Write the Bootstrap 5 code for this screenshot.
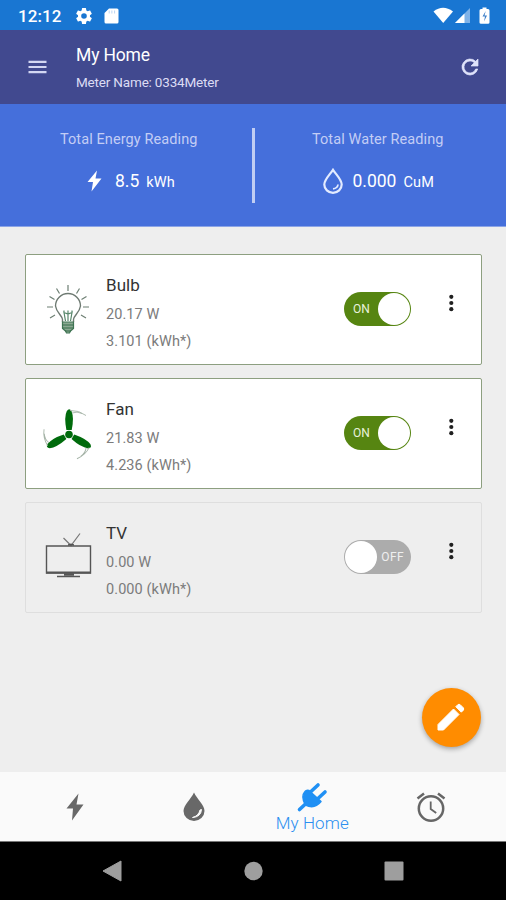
<!DOCTYPE html>
<html lang="en">
<head>
<meta charset="utf-8">
<meta name="viewport" content="width=device-width, initial-scale=1">
<title>My Home</title>
<link href="https://cdn.jsdelivr.net/npm/bootstrap@5.3.0/dist/css/bootstrap.min.css" rel="stylesheet">
<style>
body{font-family:Roboto,"Liberation Sans",sans-serif;background:#eee;color:#333;width:506px;height:900px;overflow:hidden}
svg{display:block;flex:none}
.status-bar{height:30px;background:#1976d2;padding:2px 15px 0 18px}
.clock{font-size:17px;font-weight:500;line-height:28px;width:58px;letter-spacing:.1px}
.sd-card{margin-left:12px}
.app-bar{height:74px;background:#41498f;padding:0 26px 0 28px}
.app-text{margin-left:28px}
.app-title{font-size:17.5px;line-height:24px;color:#fff;letter-spacing:-.15px;padding-top:1px}
.app-sub{font-size:13.5px;line-height:20px;color:#dcdcf4;margin-top:5px;letter-spacing:-.18px}
.readings{height:123px;background:#456fdb;border-bottom:1px solid #8ba4e6;padding-top:24px}
.reading{width:252px;padding-top:4px}
.reading-energy{padding-left:6px}
.reading-water{padding-right:5px}
.reading-label{font-size:14.5px;line-height:16px;color:#c3cdf5;letter-spacing:.1px}
.reading-row{height:28px;margin-top:19px;color:#fff}
.reading-energy .reading-row{padding-left:81px}
.reading-water .reading-row{padding-left:68px}
.reading-num{font-size:17.5px;margin-left:10px}
.reading-energy .reading-num{margin-left:13px}
.reading-unit{font-size:14.5px;padding-top:3px;margin-left:7px;letter-spacing:.15px}
.divider{width:3px;height:75px;background:#c0cdf3}
.devices{height:545px;padding:27px 24px 0 25px}
.device{height:111px;border:1px solid #8d9f80;border-radius:2px;background:#fff;margin-bottom:13px}
.device.is-off{background:#eee;border-color:#dedede}
.device-art{width:80px;padding:0 0 2px 15px}
.device-text{padding-top:5px}
.device-name{font-size:17px;line-height:22px;color:#333;letter-spacing:.05px}
.device-stat{font-size:14.5px;line-height:18px;color:#7b7b7b;letter-spacing:.08px;margin-top:9px}
.device-name + .device-stat{margin-top:10px}
.power{width:67px;height:34px;border-radius:17px;background:#568511;color:#e9f2dc;font-size:12px;border:0;padding:0 1px 0 9px;margin:-2px 34px 0 0}
.power .knob{width:32px;height:32px;border-radius:50%;background:#fff}
.is-off .power{background:#acacac;color:#efefef;padding:0 7px 0 1px;letter-spacing:.4px}
.dots{margin:-14px 24px 0 0}
.fab{position:absolute;left:422px;top:688px;width:59px;height:59px;border-radius:50%;background:#ff8c00;border:0;padding:0 1px 1px 0;box-shadow:0 2px 5px rgba(0,0,0,.32)}
.tab-bar{height:70px;background:#fafafa;border-bottom:1px solid #777;padding:0 16px}
.tab-item{padding-top:1px}
.tab-active{padding-top:10px}
.tab-text{font-size:17px;line-height:20px;color:#2b8ff0;letter-spacing:.1px;font-weight:300}
.sys-bar{height:58px;background:#000;padding:0 102px}
</style>
</head>
<body>
<header>
  <div class="status-bar d-flex align-items-center text-white">
    <span class="clock">12:12</span>
    <svg width="16" height="16" viewBox="2 2 20 20" fill="#fff"><path d="M19.43 12.98a7.8 7.8 0 0 0 0-1.96l2.11-1.65a.5.5 0 0 0 .12-.64l-2-3.46a.5.5 0 0 0-.61-.22l-2.49 1a7.3 7.3 0 0 0-1.69-.98l-.38-2.65A.5.5 0 0 0 14 2h-4a.5.5 0 0 0-.49.42l-.38 2.65c-.61.25-1.17.59-1.69.98l-2.49-1a.5.5 0 0 0-.61.22l-2 3.46a.5.5 0 0 0 .12.64l2.11 1.65a7.9 7.9 0 0 0 0 1.96l-2.11 1.65a.5.5 0 0 0-.12.64l2 3.46c.12.22.39.3.61.22l2.49-1c.52.4 1.08.73 1.69.98l.38 2.65c.03.24.24.42.49.42h4c.25 0 .46-.18.49-.42l.38-2.65c.61-.25 1.17-.59 1.69-.98l2.49 1c.23.09.49 0 .61-.22l2-3.46a.5.5 0 0 0-.12-.64zM12 15.500a3.500 3.500 0 1 1 0-7 3.500 3.500 0 0 1 0 7z"/></svg>
    <svg class="sd-card" width="15" height="16" viewBox="0 0 15 16"><path d="M5 .5h8q1.500 0 1.500 1.500v12q0 1.500-1.500 1.500H2Q.5 15.500.5 14V5z" fill="#fff"/><path d="M5.200 2.500v3M7.900 2.500v3M10.600 2.500v3" stroke="#bcd5f2" stroke-width="1"/></svg>
    <svg class="ms-auto" width="58" height="18" viewBox="0 0 58 18"><path d="M.5 4.500Q10 -3 20 4.500L10.200 16z" fill="#fff"/><path d="M22 16 37 1V16z" fill="#7fb2e8"/><path d="M22 16 31.500 6.500V16z" fill="#fff"/><path d="M46.500 3.500q0-1.500 1.500-1.500h1.500V.5h4V2H55q1.500 0 1.500 1.500v12q0 1.300-1.500 1.300h-7q-1.500 0-1.500-1.300z" fill="#fff"/><path d="M52.700 4 49.500 9.500H52L51 14.500 54 8.500H51.500z" fill="#3d7fc8"/></svg>
  </div>
  <nav class="app-bar d-flex align-items-center">
    <svg width="20" height="14" viewBox="0 0 20 14"><path d="M.5 1.800h18M.5 7h18M.5 12.200h18" stroke="#d3d7f3" stroke-width="2.200"/></svg>
    <div class="app-text flex-grow-1">
      <div class="app-title">My Home</div>
      <div class="app-sub">Meter Name: 0334Meter</div>
    </div>
    <svg width="20" height="20" viewBox="2 2 20 20" fill="#dfe3fb" stroke="#dfe3fb" stroke-width=".7"><path d="M17.650 6.350A8 8 0 1 0 19.730 14h-2.080A6 6 0 1 1 12 6c1.660 0 3.140.69 4.220 1.780L13 11h7V4z"/></svg>
  </nav>
</header>
<section class="readings d-flex">
  <div class="reading reading-energy">
    <div class="reading-label text-center">Total Energy Reading</div>
    <div class="reading-row d-flex align-items-center">
      <svg width="15" height="22" viewBox="0 0 15 22"><path d="M10 .5.5 12H6L4.500 21.500 14.500 8.500H8.500z" fill="#fff"/></svg>
      <span class="reading-num">8.5</span><span class="reading-unit">kWh</span>
    </div>
  </div>
  <div class="divider"></div>
  <div class="reading reading-water">
    <div class="reading-label text-center">Total Water Reading</div>
    <div class="reading-row d-flex align-items-center">
      <svg width="20" height="26" viewBox="0 0 20 26" fill="none" stroke="#e3ebff" stroke-width="2.200"><path d="M10 1.800C7 6.500 1.300 11.500 1.300 16.500a8.700 8.300 0 0 0 17.400 0C18.700 11.500 13 6.500 10 1.800z"/><path d="M15 16.500q-.5 3.800-5 4.300" stroke-width="1.800"/></svg>
      <span class="reading-num">0.000</span><span class="reading-unit">CuM</span>
    </div>
  </div>
</section>
<main class="devices">
  <article class="device d-flex align-items-center">
    <div class="device-art"><svg width="56" height="56" viewBox="0 0 56 56" fill="none" stroke="#6d7f73" stroke-width="1.200"><path d="M21.500 41V38.500C21 34 15.500 32 14.500 25A12.500 12.500 0 1 1 39.500 25C38.500 32 33 34 32.500 38.500V41" stroke="#6e7a72" stroke-width="1.400"/><path d="M27 4v6M15.500 7.500l3 5M38.500 7.500l-3 5M8.500 15.500l5 3M45.500 15.500l-5 3M6 26h6M42 26h6M9 37l5-3M45 37l-5-3"/><path d="M24.500 40 23 31.500l4 1.500 4-1.500-1.500 8.500M23 29.500v2.500M27 29.500v3M31 29.500v2.500M27 33v7" stroke="#56866a"/><path d="M21.500 41h11v6.500l-3 2.500-1 2h-3l-1-2-3-2.500z" fill="#8ba892" stroke="#417655"/><path d="M21.500 44h11M21.500 47h11M24 50h6" stroke="#376e4b"/></svg></div>
    <div class="device-text flex-grow-1">
      <div class="device-name">Bulb</div><div class="device-stat">20.17 W</div><div class="device-stat">3.101 (kWh*)</div>
    </div>
    <button class="power d-flex align-items-center justify-content-between" type="button"><span>ON</span><span class="knob"></span></button>
    <svg class="dots" width="12" height="18" viewBox="0 0 12 18" fill="#202020"><circle cx="6.300" cy="2.800" r="2.100"/><circle cx="6.300" cy="9" r="2.100"/><circle cx="6.300" cy="15.200" r="2.100"/></svg>
  </article>
  <article class="device d-flex align-items-center">
    <div class="device-art"><svg width="56" height="56" viewBox="0 0 56 56"><g fill="#006b0c"><circle cx="28" cy="29.500" r="3.800"/><g id="blade"><path d="M25.400 25Q22.900 12 25.800 6Q28.300 2.500 30.500 6Q33.300 13 30.700 25z"/><path d="M29 5.500Q38 5 45 10.500M31 8Q36 6 41 8.500" fill="none" stroke="#a5b3a7" stroke-width=".9"/></g><use href="#blade" transform="rotate(120 28 29.500)"/><use href="#blade" transform="rotate(240 28 29.500)"/></g></svg></div>
    <div class="device-text flex-grow-1">
      <div class="device-name">Fan</div><div class="device-stat">21.83 W</div><div class="device-stat">4.236 (kWh*)</div>
    </div>
    <button class="power d-flex align-items-center justify-content-between" type="button"><span>ON</span><span class="knob"></span></button>
    <svg class="dots" width="12" height="18" viewBox="0 0 12 18" fill="#202020"><circle cx="6.300" cy="2.800" r="2.100"/><circle cx="6.300" cy="9" r="2.100"/><circle cx="6.300" cy="15.200" r="2.100"/></svg>
  </article>
  <article class="device is-off d-flex align-items-center">
    <div class="device-art"><svg width="56" height="56" viewBox="0 1 56 56" fill="none" stroke="#555"><path d="M22.500 10 30 17.500 39 5.500" stroke="#777" stroke-width="1.200"/><path d="M27 17q3-2 6 0z" fill="#555"/><path d="M5.500 18h44v27h-44z" stroke-width="1.400"/><path d="M5 44.500h45" stroke-width="2"/><path d="M23 46.500h10" stroke-width="2.500"/><path d="M16 48.500h23" stroke-width="1.500"/></svg></div>
    <div class="device-text flex-grow-1">
      <div class="device-name">TV</div><div class="device-stat">0.00 W</div><div class="device-stat">0.000 (kWh*)</div>
    </div>
    <button class="power d-flex align-items-center justify-content-between" type="button"><span class="knob"></span><span>OFF</span></button>
    <svg class="dots" width="12" height="18" viewBox="0 0 12 18" fill="#202020"><circle cx="6.300" cy="2.800" r="2.100"/><circle cx="6.300" cy="9" r="2.100"/><circle cx="6.300" cy="15.200" r="2.100"/></svg>
  </article>
</main>
<button class="fab d-flex align-items-center justify-content-center" type="button" aria-label="Edit">
  <svg width="28" height="28" viewBox="0 0 28 28" fill="#fff" stroke="#fff" stroke-width="1" stroke-linejoin="round"><path d="M1 21.500 16.500 6l5.500 5.500L6.500 27H1z"/><path d="M18.800 3.700 20.800 1.700Q22 .8 23.200 1.700L26.300 4.800Q27.200 6 26.300 7.200L24.300 9.200z"/></svg>
</button>
<nav class="tab-bar row row-cols-4 g-0">
  <div class="tab-item col d-flex align-items-center justify-content-center"><svg width="18" height="28" viewBox="0 0 18 28"><path d="M12.500.5.500 15.500H7L6 27.500 17.500 11.500H10.500z" fill="#686868"/></svg></div>
  <div class="tab-item col d-flex align-items-center justify-content-center"><svg width="22" height="30" viewBox="0 0 22 30"><path d="M11 .5C8 7 .5 13 .5 19a10.500 10 0 0 0 21 0C21.500 13 14 7 11 .5z" fill="#686868"/><path d="M18.500 17.500Q18 25 9.500 25.500q6-1.500 7.500-7.500z" fill="#fafafa" stroke="#fafafa" stroke-width="1"/></svg></div>
  <div class="tab-active col d-flex flex-column align-items-center">
    <svg width="32" height="31" viewBox="-1 0 32 31" fill="none" stroke="#2090f4" stroke-width="3.600" stroke-linecap="round"><path d="M2.500 27.500 9 21.500M14 9.500 21 3M21.500 16 28 10"/><path d="M8.500 23Q3.500 14.500 8 9.500Q9.500 7.500 12 8.500L24 19.500Q17.500 27.500 8.500 23z" fill="#2090f4" stroke-width="1.500" stroke-linejoin="round"/></svg>
    <span class="tab-text">My Home</span>
  </div>
  <div class="tab-item col d-flex align-items-center justify-content-center"><svg width="30" height="30" viewBox="0 0 30 30" fill="none" stroke="#666" stroke-width="2.500"><circle cx="15" cy="16.500" r="12.200"/><path d="M14.700 9.500v7.500l5.500 4" stroke-width="1.800"/><path d="M1.500 6.500 8 1.500M28.500 6.500 22 1.500"/></svg></div>
</nav>
<footer class="sys-bar d-flex align-items-center justify-content-between">
  <svg width="20" height="22" viewBox="0 0 20 22"><path d="M19 1v20L1 11z" fill="#9e9e9e" stroke="#9e9e9e" stroke-linejoin="round"/></svg>
  <svg width="20" height="20" viewBox="0 0 20 20"><circle cx="10.500" cy="10" r="9.200" fill="#9e9e9e"/></svg>
  <svg width="20" height="20" viewBox="0 0 20 20"><rect x=".5" y=".5" width="19" height="19" rx="1" fill="#9e9e9e"/></svg>
</footer>
<script src="https://cdn.jsdelivr.net/npm/bootstrap@5.3.0/dist/js/bootstrap.bundle.min.js"></script>
</body>
</html>
